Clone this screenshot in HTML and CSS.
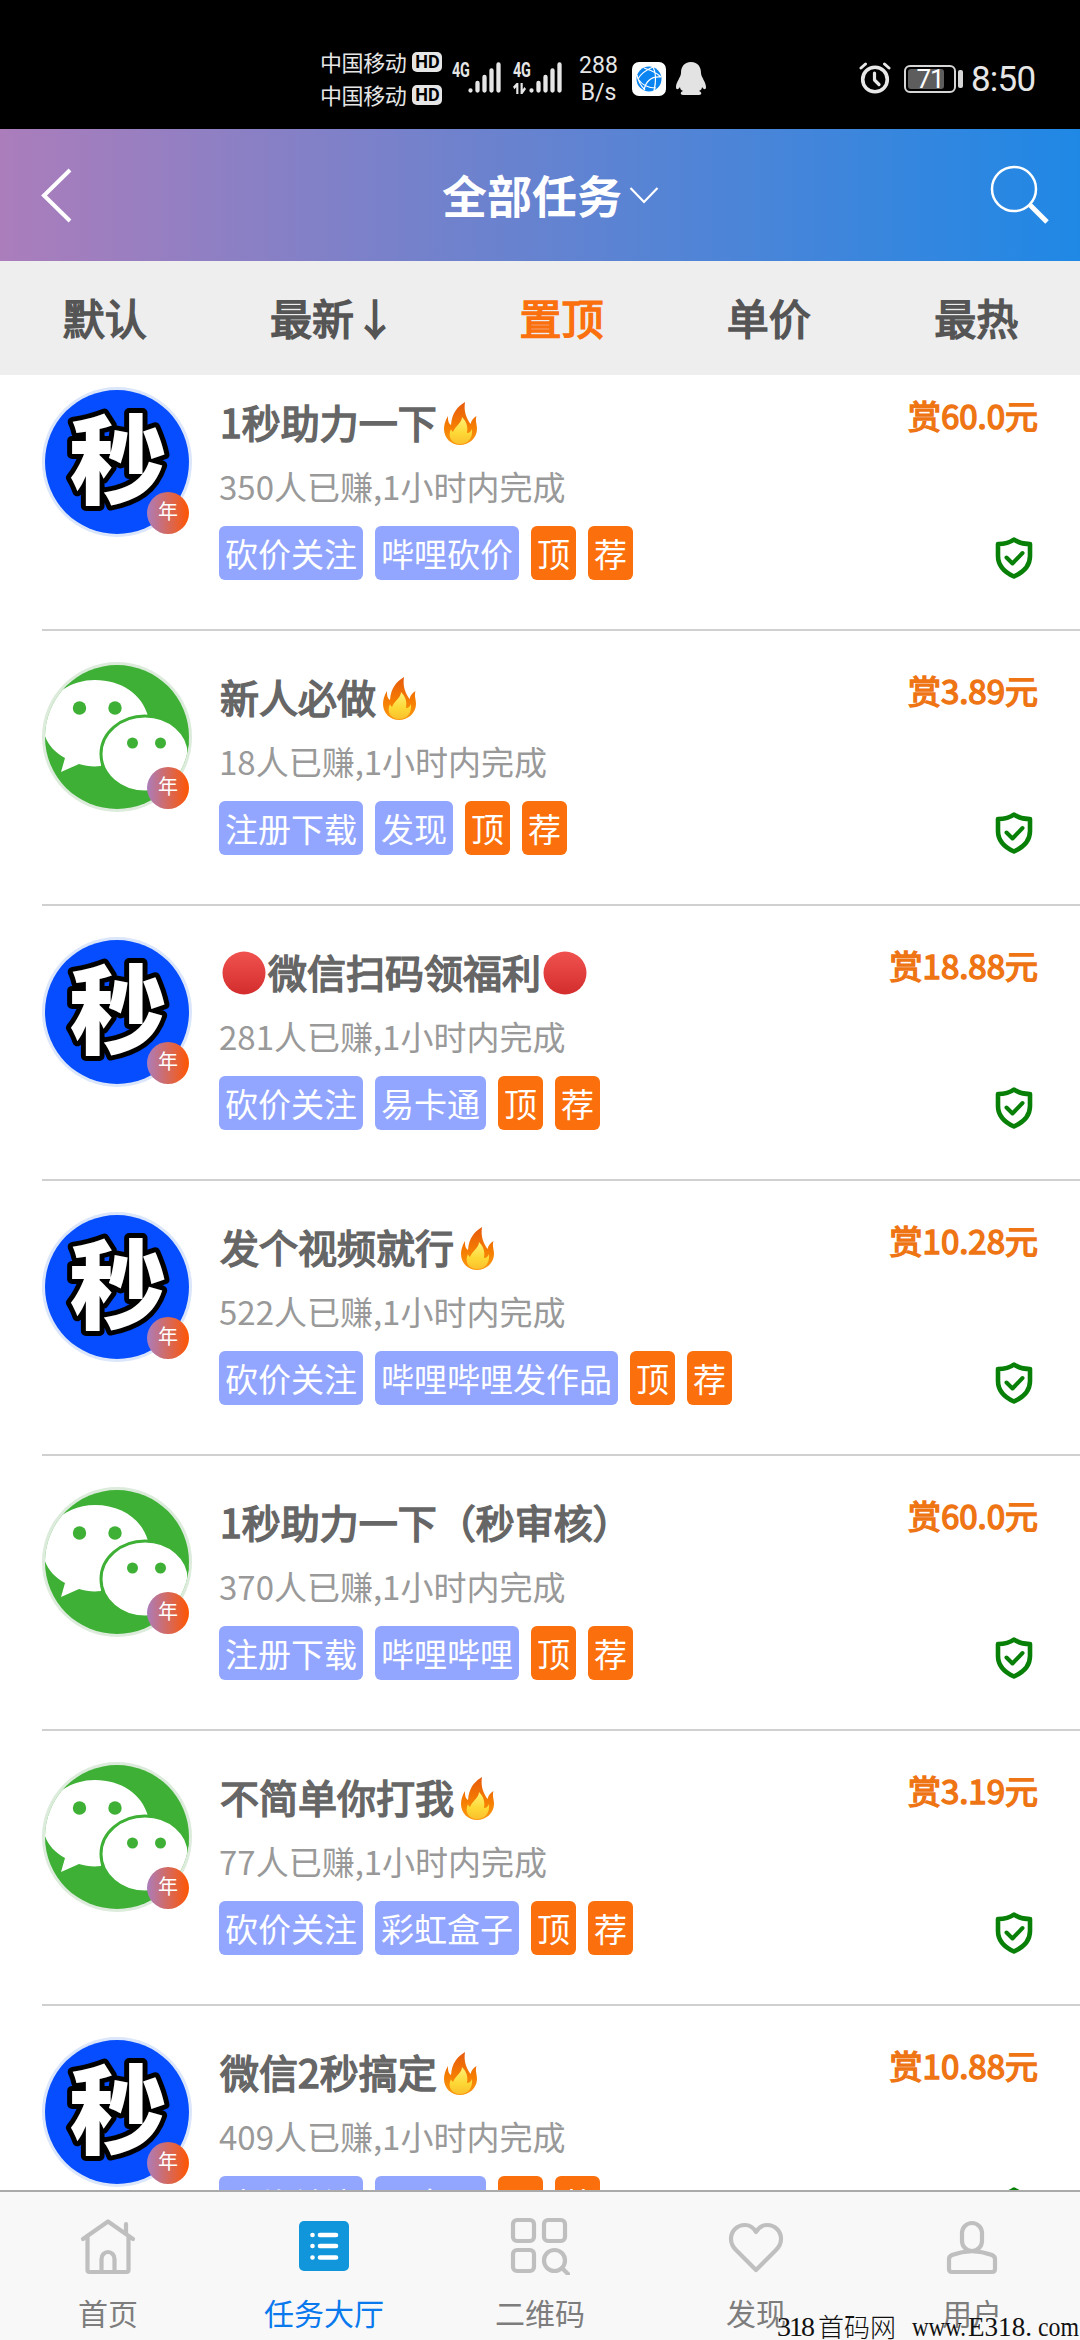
FILE: index.html
```html
<!DOCTYPE html>
<html lang="zh-CN">
<head>
<meta charset="utf-8">
<title>全部任务</title>
<link rel="stylesheet" href="styles.css">
</head>
<body>
<svg class="defs" width="0" height="0">
  <defs>
    <linearGradient id="flameOuter" x1="0" y1="0" x2="0" y2="1"><stop offset="0" stop-color="#e65a0e"/><stop offset=".55" stop-color="#f57c00"/><stop offset="1" stop-color="#fb9a12"/></linearGradient>
    <linearGradient id="flameInner" x1="0" y1="0" x2="0" y2="1"><stop offset="0" stop-color="#fff176"/><stop offset=".6" stop-color="#fdd835"/><stop offset="1" stop-color="#fbc02d"/></linearGradient>
    <linearGradient id="redBall" x1="0" y1="0" x2="0" y2="1"><stop offset="0" stop-color="#f0524f"/><stop offset="1" stop-color="#d32d2d"/></linearGradient>
    <clipPath id="disc"><circle cx="75" cy="75" r="72"/></clipPath>
  </defs>
  <symbol id="fire" viewBox="0 0 48 48">
    <path d="M28 3C20 8 15 14 14 26c-3-2-3-5-3-9-3 5-4 9-4 13 0 9 7 16 16 16s17-7 17-16c0-5-2-8-.500-13-3 2-5 4-6 8-4-6-7-12-5.500-22z" fill="url(#flameOuter)"/>
    <path d="M25 18c0 6-7 9-9 15-1-1-2-2-2-3-4 8 1 15 9 15s13-6 12-15c-1 2-2 4-5 4 1-6 0-11-5-16z" fill="url(#flameInner)"/>
  </symbol>
  <symbol id="ball" viewBox="0 0 48 48"><circle cx="24" cy="24" r="21.5" fill="url(#redBall)"/></symbol>
  <symbol id="shield" viewBox="0 0 38 42">
    <path d="M19 2.5C14.500 6 8.500 7 3 7v12c0 9 6 16 16 20.500C29 35 35 28 35 19V7c-5.500 0-11.500-1-16-4.500z" fill="none" stroke="#088008" stroke-width="4.600" stroke-linejoin="round"/>
    <path d="M11.500 20.500l6 6 10-10.500" fill="none" stroke="#088008" stroke-width="4" stroke-linecap="round" stroke-linejoin="round"/>
  </symbol>
  <symbol id="wechat" viewBox="0 0 150 150">
    <circle cx="75" cy="75" r="75" fill="#dcebdc"/>
    <g clip-path="url(#disc)">
      <rect width="150" height="150" fill="#3eb035"/>
      <path d="M53 18C24 18 1 38 1 63c0 14 9 26 22 33l-4 14 18-8c7 2 14 3 22 2C57 74 78 54 106 54 100 32 79 18 53 18z" fill="#fff"/>
      <ellipse cx="103" cy="92" rx="44" ry="38" fill="#fff" stroke="#3eb035" stroke-width="3"/>
      <circle cx="37.500" cy="46" r="6.700" fill="#3eb035"/><circle cx="73" cy="46" r="6.700" fill="#3eb035"/>
      <circle cx="90.500" cy="81" r="5.500" fill="#3eb035"/><circle cx="118.500" cy="81" r="5.500" fill="#3eb035"/>
    </g>
  </symbol>
  <symbol id="miao" viewBox="0 0 150 150">
    <circle cx="75" cy="75" r="75" fill="#dbe6fa"/>
    <circle cx="75" cy="75" r="72" fill="#054dff"/>
    <text class="miao-text" x="76" y="109" text-anchor="middle">秒</text>
  </symbol>
  <symbol id="bars" viewBox="0 0 34 31">
    <path d="M2.500 28.500v0M9.500 28.500V21M16.500 28.500V15M23.500 28.500V8.500M30.500 28.500V2.500" stroke="#e6e6e6" stroke-width="4.300" stroke-linecap="round"/>
  </symbol>
</svg>

<div class="screen">
  <div class="status">
    <div class="carriers">
      <div class="carrier">中国移动<span class="hd">HD</span></div>
      <div class="carrier">中国移动<span class="hd">HD</span></div>
    </div>
    <div class="signal first"><span class="net">4G</span><svg class="bars" width="34" height="31"><use href="#bars"/></svg></div>
    <div class="signal"><span class="net">4G<svg class="updown" width="20" height="11" viewBox="0 0 20 11"><path d="M1 5l5-4v10M12 0v10l5-5" fill="none" stroke="#e6e6e6" stroke-width="3"/></svg></span><svg class="bars" width="34" height="31"><use href="#bars"/></svg></div>
    <div class="speed"><span>288</span><span>B/s</span></div>
    <svg class="globe" width="34" height="34" viewBox="0 0 34 34"><rect width="34" height="34" rx="7" fill="#fff"/><circle cx="17" cy="17" r="12.500" fill="#0a84f0"/><path d="M21 5c-7 3-12 6-15 12 4 6 10 9 18 9M12 6c6 2 12 4 17 9M21 5c4 7 3 15 1 24M12 28c2-9 7-14 17-13M5 13c1 6 4 11 8 15" fill="none" stroke="#fff" stroke-width="1.200"/></svg>
    <svg class="penguin" width="30" height="34" viewBox="0 0 30 34"><path d="M15 0C8 0 5 5 5 11c0 4-5 9-5 14 0 3 2 3 4 0 0 2 1 3 3 4-3 1-3 4 0 4h16c3 0 3-3 0-4 2-1 3-2 3-4 2 3 4 3 4 0 0-5-5-10-5-14 0-6-3-11-10-11z" fill="#e3e3e3"/></svg>
    <svg class="alarm" width="32" height="32" viewBox="0 0 32 32"><g fill="none" stroke="#e8e8e8" stroke-linecap="round" stroke-linejoin="round"><circle cx="16" cy="17.500" r="12.300" stroke-width="3.600"/><path d="M15.500 11v7l4.500 4.500" stroke-width="3.200"/><path d="M2 6l4.500-4M30 6l-4.500-4" stroke-width="3"/></g></svg>
    <div class="battery"><span>71</span></div>
    <div class="nub"></div>
    <div class="clock">8:50</div>
  </div>

  <header class="header">
    <svg class="back" width="34" height="56" viewBox="0 0 34 56"><path d="M30 2L4 27.500 30 53" fill="none" stroke="#fff" stroke-width="4"/></svg>
    <h1 class="title">全部任务<svg class="caret" width="30" height="20" viewBox="0 0 30 20"><path d="M1.500 2L15 16 28.500 2" fill="none" stroke="#fff" stroke-width="2.200"/></svg></h1>
    <svg class="search" width="60" height="60" viewBox="0 0 60 60"><circle cx="24" cy="24" r="22" fill="none" stroke="#fff" stroke-width="2.500"/><path d="M40 40l17 17" stroke="#fff" stroke-width="5"/></svg>
  </header>

  <nav class="tabs"><span>默认</span><span>最新↓</span><span class="on">置顶</span><span>单价</span><span>最热</span></nav>

  <main class="list">
    <article class="task">
      <div class="avatar"><svg width="150" height="150"><use href="#miao"/></svg><span class="year">年</span></div>
      <div class="info"><h2>1秒助力一下<svg class="emoji"><use href="#fire"/></svg></h2><p>350人已赚,1小时内完成</p><div class="tags"><span>砍价关注</span><span>哔哩砍价</span><span class="hot">顶</span><span class="hot">荐</span></div></div>
      <div class="side"><b>赏60.0元</b><svg class="shield"><use href="#shield"/></svg></div>
    </article>
    <article class="task">
      <div class="avatar"><svg width="150" height="150"><use href="#wechat"/></svg><span class="year">年</span></div>
      <div class="info"><h2>新人必做<svg class="emoji"><use href="#fire"/></svg></h2><p>18人已赚,1小时内完成</p><div class="tags"><span>注册下载</span><span>发现</span><span class="hot">顶</span><span class="hot">荐</span></div></div>
      <div class="side"><b>赏3.89元</b><svg class="shield"><use href="#shield"/></svg></div>
    </article>
    <article class="task">
      <div class="avatar"><svg width="150" height="150"><use href="#miao"/></svg><span class="year">年</span></div>
      <div class="info"><h2><svg class="emoji"><use href="#ball"/></svg>微信扫码领福利<svg class="emoji"><use href="#ball"/></svg></h2><p>281人已赚,1小时内完成</p><div class="tags"><span>砍价关注</span><span>易卡通</span><span class="hot">顶</span><span class="hot">荐</span></div></div>
      <div class="side"><b>赏18.88元</b><svg class="shield"><use href="#shield"/></svg></div>
    </article>
    <article class="task">
      <div class="avatar"><svg width="150" height="150"><use href="#miao"/></svg><span class="year">年</span></div>
      <div class="info"><h2>发个视频就行<svg class="emoji"><use href="#fire"/></svg></h2><p>522人已赚,1小时内完成</p><div class="tags"><span>砍价关注</span><span>哔哩哔哩发作品</span><span class="hot">顶</span><span class="hot">荐</span></div></div>
      <div class="side"><b>赏10.28元</b><svg class="shield"><use href="#shield"/></svg></div>
    </article>
    <article class="task">
      <div class="avatar"><svg width="150" height="150"><use href="#wechat"/></svg><span class="year">年</span></div>
      <div class="info"><h2>1秒助力一下（秒审核）</h2><p>370人已赚,1小时内完成</p><div class="tags"><span>注册下载</span><span>哔哩哔哩</span><span class="hot">顶</span><span class="hot">荐</span></div></div>
      <div class="side"><b>赏60.0元</b><svg class="shield"><use href="#shield"/></svg></div>
    </article>
    <article class="task">
      <div class="avatar"><svg width="150" height="150"><use href="#wechat"/></svg><span class="year">年</span></div>
      <div class="info"><h2>不简单你打我<svg class="emoji"><use href="#fire"/></svg></h2><p>77人已赚,1小时内完成</p><div class="tags"><span>砍价关注</span><span>彩虹盒子</span><span class="hot">顶</span><span class="hot">荐</span></div></div>
      <div class="side"><b>赏3.19元</b><svg class="shield"><use href="#shield"/></svg></div>
    </article>
    <article class="task">
      <div class="avatar"><svg width="150" height="150"><use href="#miao"/></svg><span class="year">年</span></div>
      <div class="info"><h2>微信2秒搞定<svg class="emoji"><use href="#fire"/></svg></h2><p>409人已赚,1小时内完成</p><div class="tags"><span>砍价关注</span><span>易卡通</span><span class="hot">顶</span><span class="hot">荐</span></div></div>
      <div class="side"><b>赏10.88元</b><svg class="shield"><use href="#shield"/></svg></div>
    </article>
  </main>

  <footer class="tabbar">
    <a><svg viewBox="0 0 60 60"><g class="line"><path d="M5 24L30 6.500 55 24M9.500 22v33q0 2 2 2h37q2 0 2-2V22M48 18V9M23.500 57V44a6.500 7 0 0 1 13 0v13"/></g></svg>首页</a>
    <a class="on"><svg viewBox="0 0 60 60"><rect x="5" y="6" width="50" height="50" rx="5" fill="#1296db"/><path d="M18.500 20h0M18.500 31h0M18.500 42.500h0M26 20h16M26 31h16M26 42.500h16" stroke="#fff" stroke-width="4.600" stroke-linecap="round"/></svg>任务大厅</a>
    <a><svg viewBox="0 0 60 60"><g class="line"><rect x="3" y="5" width="21" height="21" rx="4"/><rect x="34" y="5" width="21" height="21" rx="4"/><rect x="3" y="35" width="21" height="21" rx="4"/><circle cx="44.500" cy="45.500" r="10.500"/><path d="M52 53l6 6"/></g></svg>二维码</a>
    <a><svg viewBox="0 0 60 60"><g class="line"><path d="M30 17C27 12 23 10 19 10 11 10 5 16 5 24c0 5 2 8 5 11l20 20 20-20c3-3 5-6 5-11 0-8-6-14-14-14-4 0-8 2-11 7z"/></g></svg>发现</a>
    <a><svg viewBox="0 0 60 60"><g class="line"><rect x="20" y="8" width="20" height="28" rx="10"/><path d="M7 44q0-2.500 3-4 20-7.500 40 0 3 1.500 3 4v10q0 3-3 3H10q-3 0-3-3z"/></g></svg>用户</a>
  </footer>

  <svg class="watermark" width="304" height="32" viewBox="0 0 304 32">
    <text x="0" y="22" textLength="38">318</text>
    <text x="41" y="23" textLength="78" class="cn">首码网</text>
    <text x="135" y="22" textLength="54" lengthAdjust="spacingAndGlyphs">www.</text>
    <text x="191" y="22" textLength="64" lengthAdjust="spacingAndGlyphs">E318.</text>
    <text x="261" y="22" textLength="41" lengthAdjust="spacingAndGlyphs">com</text>
  </svg>
</div>
</body>
</html>
```
FILE: styles.css
```css
* { box-sizing: border-box; margin: 0; padding: 0; }
body { background: #fff; font-family: "Noto Sans CJK SC", sans-serif; }
svg { display: block; flex: none; }
.defs { position: absolute; }
.screen { width: 1080px; height: 2340px; display: flex; flex-direction: column; overflow: hidden; position: relative; }

.status { height: 129px; flex: none; background: #000; color: #e6e6e6; display: flex; align-items: flex-start; padding-left: 320px; font-family: Roboto, sans-serif; }
.carriers { width: 132px; padding-top: 45px; }
.carrier { height: 33px; display: flex; align-items: center; font: 22px/33px "Noto Sans CJK SC", sans-serif; letter-spacing: -.4px; }
.hd { width: 30px; height: 20px; margin-left: 6px; border-radius: 5px; background: #e6e6e6; color: #000; font: 700 18px/20px Roboto, sans-serif; letter-spacing: 0; text-align: center; }
.signal { display: flex; padding-top: 62px; width: 51px; }
.signal.first { width: 61px; }
.net { width: 16px; font: 700 20px/17px Roboto, sans-serif; letter-spacing: -.5px; white-space: nowrap; height: 31px; transform: scaleX(.72); transform-origin: left; }
.updown { margin-top: 4px; }
.speed { width: 45px; margin-left: 12px; padding-top: 52px; display: flex; flex-direction: column; align-items: center; font-size: 23px; line-height: 27px; }
.globe { margin: 62px 10px 0 11px; }
.penguin { margin-top: 62px; }
.alarm { margin: 62px 0 0 153px; }
.battery { width: 52px; height: 28px; margin: 65px 0 0 13px; border: 2px solid #d6d6d6; border-radius: 6px; padding: 2px; }
.battery span { display: block; width: 36px; height: 20px; background: #5d5d5d; border-radius: 3px; color: #fff; font-size: 26px; line-height: 20px; text-align: center; padding-left: 8px; letter-spacing: -1px; }
.nub { width: 5px; height: 18px; margin: 70px 8px 0 2px; border-radius: 2px; background: #d6d6d6; }
.clock { font-size: 35px; line-height: 40px; margin-top: 60px; letter-spacing: -.8px; }

.header { height: 132px; flex: none; background: linear-gradient(90deg, #ab7dbb, #1f88e5); display: flex; align-items: flex-start; color: #fff; padding-left: 40px; }
.back { margin-top: 39px; }
.title { font-size: 45px; line-height: 66px; font-weight: 700; margin: 33px 0 0 368px; display: flex; }
.caret { margin: 24px 0 0 7px; }
.search { margin: 36px 0 0 331px; }

.tabs { height: 114px; flex: none; background: #eee; display: flex; justify-content: space-around; font-size: 42px; line-height: 111px; color: #555; padding-left: 1px; -webkit-text-stroke: 1.6px; }
.tabs .on { color: #fb700e; }

.list { flex: 1; overflow: hidden; min-height: 0; }
.task { height: 275px; margin-left: 42px; padding: 31px 42px 0 0; border-bottom: 2px solid #d0d0d0; display: flex; }
.task:first-child { height: 256px; padding-top: 12px; }
.avatar { width: 150px; height: 150px; position: relative; flex: none; }
.year { position: absolute; left: 105px; top: 105px; width: 42px; height: 42px; border-radius: 50%; background: linear-gradient(90deg, #ab7dbb, #ff5500); color: #fff; font-size: 20px; line-height: 38px; text-align: center; }
.miao-text { font: 900 97px "Noto Sans CJK SC", sans-serif; fill: #fff; stroke: #000; stroke-width: 10px; stroke-linejoin: round; paint-order: stroke; }
.info { flex: 1; margin-left: 27px; padding-top: 10px; }
.info h2 { display: flex; align-items: center; height: 48px; padding-left: 1px; font-size: 39px; line-height: 48px; font-weight: 400; color: #666; -webkit-text-stroke: 1.6px; }
.emoji { width: 48px; height: 48px; margin-top: 4px; }
.info p { height: 48px; margin-top: 17px; font-size: 33px; line-height: 48px; color: #999; }
.tags { display: flex; gap: 12px; margin-top: 16px; }
.tags span { height: 54px; border-radius: 6px; padding: 0 6px; background: #92a6ff; color: #fff; font-size: 33px; line-height: 55px; }
.tags .hot { background: #fb700c; }
.side { display: flex; flex-direction: column; align-items: flex-end; }
.side b { font-size: 33px; line-height: 40px; margin-top: 8px; color: #ee7414; font-weight: 400; -webkit-text-stroke: 1.5px; }
.shield { width: 38px; height: 42px; margin: 102px 5px 0 0; }

.tabbar { height: 150px; flex: none; background: #f8f8f8; border-top: 2px solid #aaa; display: flex; }
.tabbar a { flex: 1; display: flex; flex-direction: column; align-items: center; padding-top: 23px; font-size: 30px; line-height: 44px; color: #7d7d7d; }
.tabbar svg { width: 60px; height: 60px; margin-bottom: 15px; }
.tabbar .on { color: #0a79ee; }
.line { fill: none; stroke: #bfbfbf; stroke-width: 4.200px; stroke-linecap: round; stroke-linejoin: round; }

.watermark { position: absolute; left: 777px; top: 2314px; font: 28px "Liberation Serif", "Noto Sans CJK SC", serif; fill: #111; }
.watermark .cn { font: 300 26px "Noto Sans CJK SC", sans-serif; }
```
